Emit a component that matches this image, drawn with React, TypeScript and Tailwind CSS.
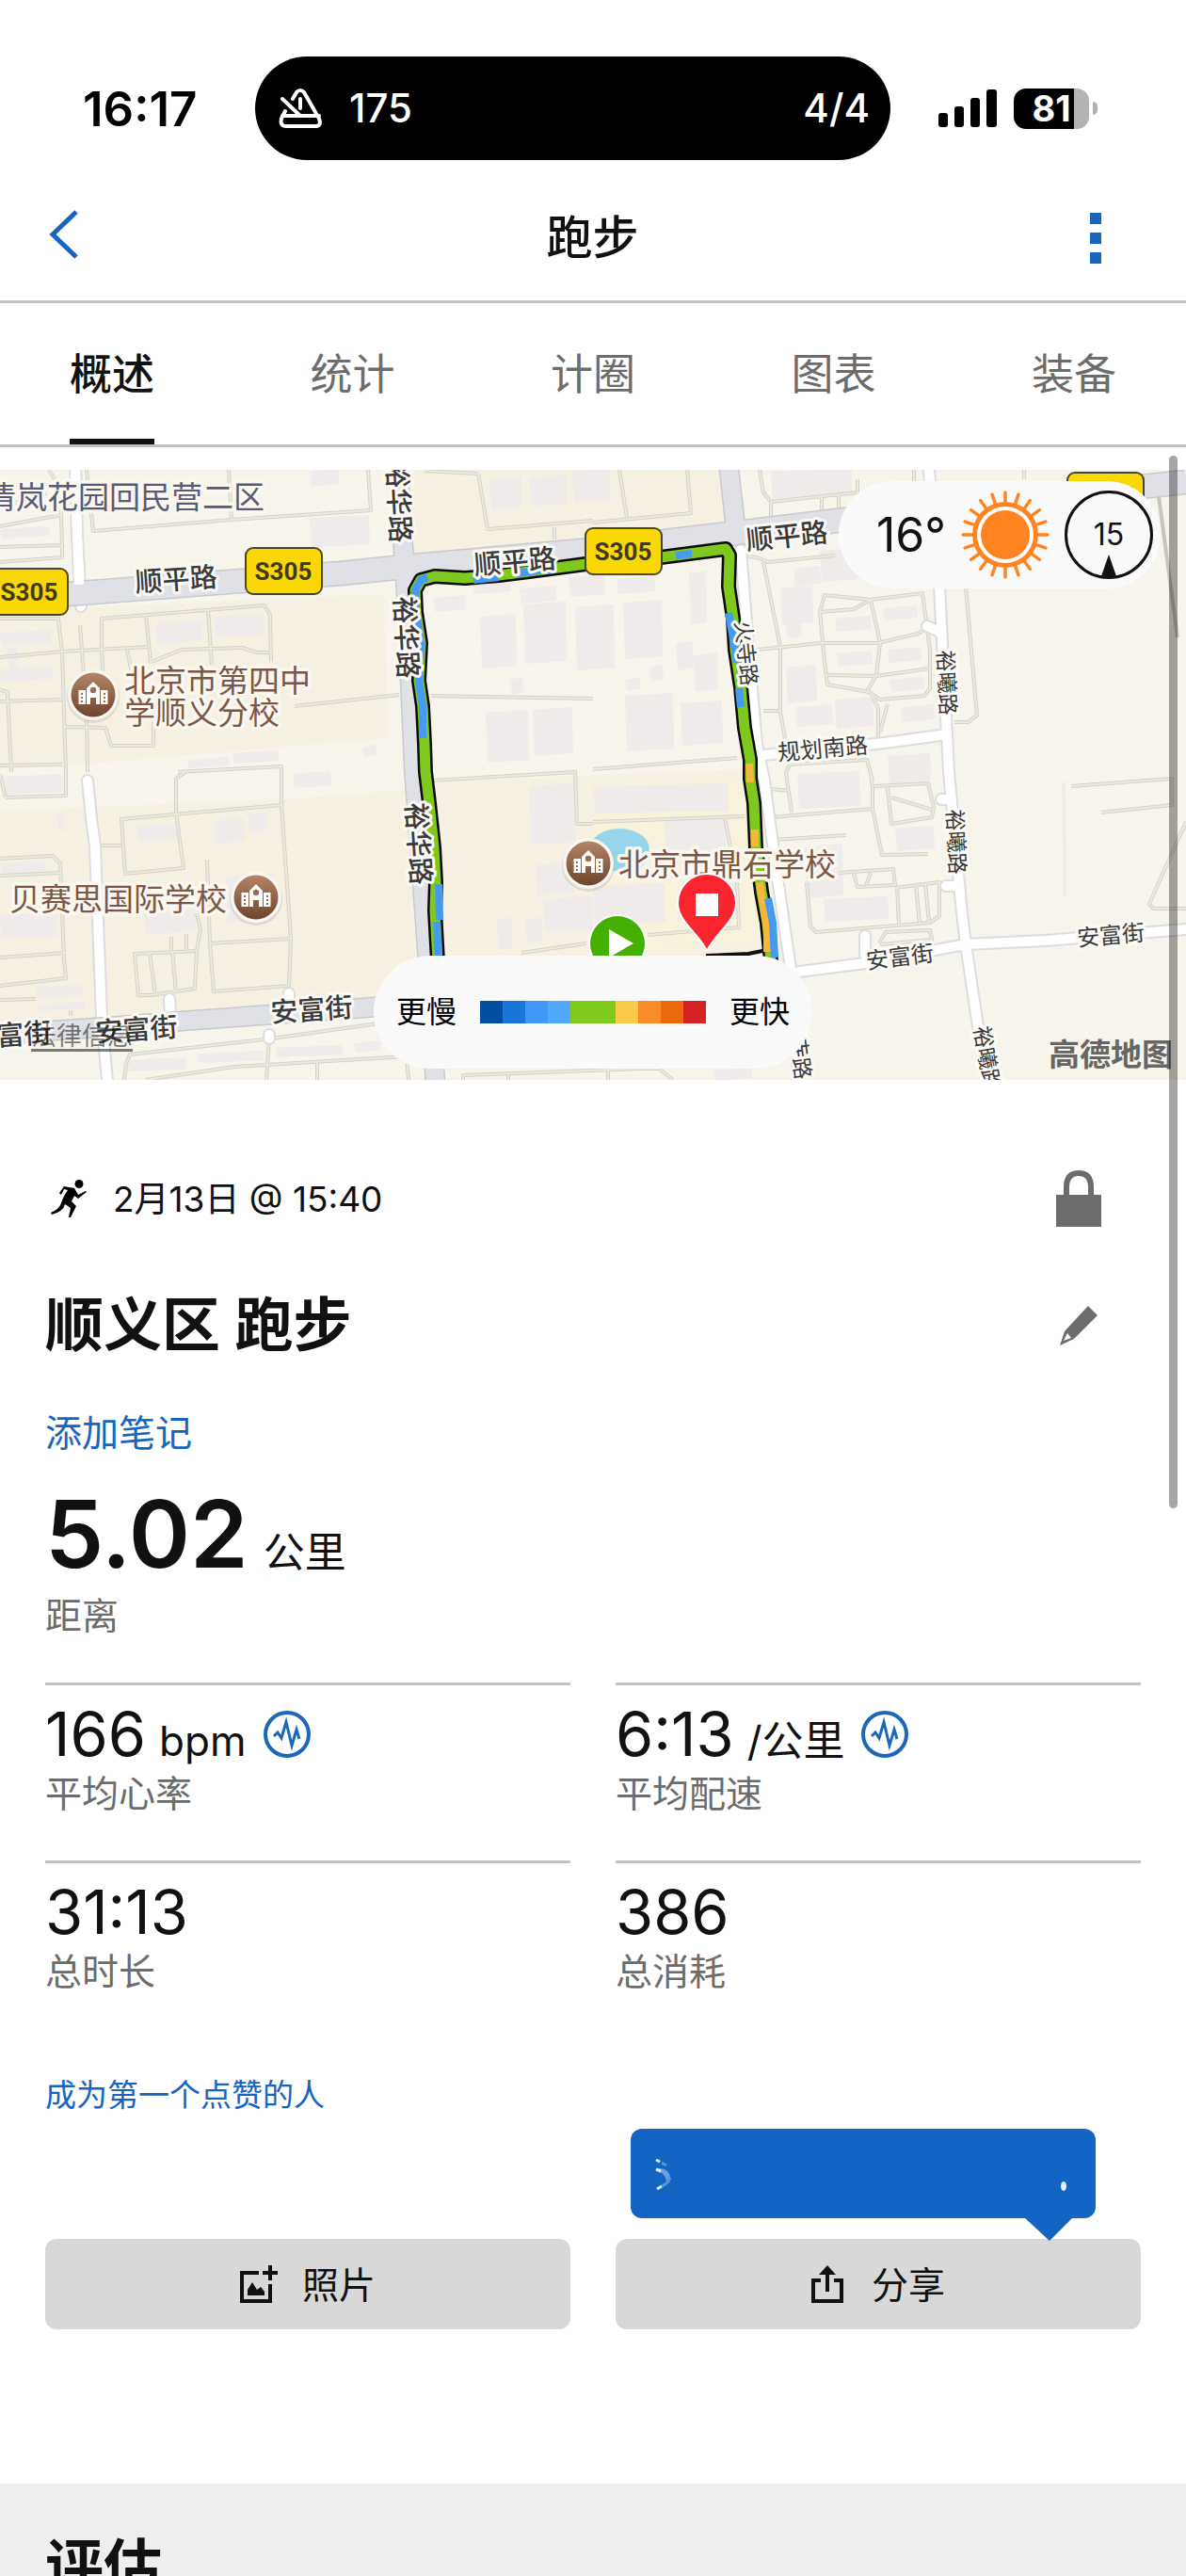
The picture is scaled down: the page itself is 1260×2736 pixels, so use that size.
import { useState } from "react";

const FONT = "font-['Inter','Noto_Sans_CJK_SC',sans-serif]";

const tabs = ["概述", "统计", "计圈", "图表", "装备"];

const legendColors = [
  "bg-[#004da3]",
  "bg-[#1976d8]",
  "bg-[#3f97f5]",
  "bg-[#52a8ff]",
  "bg-[#7ecb1c]",
  "bg-[#7ecb1c]",
  "bg-[#fdc94b]",
  "bg-[#fa8b29]",
  "bg-[#ec6a0d]",
  "bg-[#d52222]",
];

interface Stat {
  value: string;
  unit?: string;
  label: string;
  chart?: boolean;
}

const stats: Stat[] = [
  { value: "166", unit: "bpm", label: "平均心率", chart: true },
  { value: "6:13", unit: "/公里", label: "平均配速", chart: true },
  { value: "31:13", label: "总时长" },
  { value: "386", label: "总消耗" },
];

// Map data, in map units (1260 x 648)
const footpaths = [
  "M92 0 99 65 246 53 394 43 391 0M243 0 246 53",
  "M0 82 66 80 64 20 52 0M0 98 66 93V80M0 60 64 48M0 40 50 25",
  "M108 193V158L281 144 287 154 288 204M155 154 160 205M221 149 225 207",
  "M0 199 66 193 157 188M161 204 193 191 257 189 273 194H288",
  "M0 158H62L66 193 70 321M135 191 141 220M0 246 66 244M68 273 112 274 118 293H163V268",
  "M108 193 111 240M85 165 92 258 93 321M313 251 424 239M0 234 8 236 12 321M0 314 66 313",
  "M189 321 299 315 299 356M508 4 518 63 630 54M589 61V74M450 1 508 4M458 240 514 241 630 243",
  "M658 0 666 51M630 56 734 46 730 0M807 0 811 24 819 34 911 24V10M819 34V54M873 29V46M891 26V44",
  "M793 91 807 94 815 98 887 91M811 98 829 188V258L834 285M805 191 873 184 933 184 975 174 985 168",
  "M876 133 871 151 876 204 879 228 923 236 935 244 982 240 988 232V191L980 131 925 138Z",
  "M871 151 907 148 925 138 935 184 931 218 921 236M877 218 931 219 988 211M925 236 933 254V284M943 249 935 278",
  "M1026 124 1038 261 1028 268H1014M811 256H829M630 318 783 306M835 321 839 313 921 308 927 330M971 0V14M1088 0V10",
  "M459 330 611 321 613 376H630M630 374 791 368M820 369 927 360V338L925 321M835 321 841 364M819 339 839 341",
  "M929 336 986 333 992 358 990 369 947 376 943 338M947 348 990 361M927 360 937 409 986 408M821 393 899 388",
  "M891 428 949 424 951 441 911 443 907 428M925 428 920 441M951 444 998 438V474L988 481 867 491 861 485 857 438",
  "M953 443 955 483M973 441 977 482M983 440 987 480M935 501 941 491 988 489 990 499 937 504ZM827 431 839 524 849 530",
  "M1138 336 1245 328V356L1170 364M1260 374 1221 461 1225 466H1260M688 494 785 486 783 438M770 369 776 401M554 513 623 503",
  "M197 321 187 328V364L195 423 133 429 129 371 299 356 309 498 223 503 227 554 307 548 309 498M108 399H129",
  "M220 414 223 503M143 514 209 511 207 551 161 558H147ZM159 513 165 558M183 511 187 555M209 511 213 488 209 471M182 496V511M198 493V511",
  "M0 413 56 410 64 418 68 520 70 540 0 548M0 518 70 513M0 431 64 428M6 348 70 346V321M6 348 0 324M0 563 38 562M75 574V580",
  "M132 648 134 631 138 621 289 604 402 588M154 648 249 634 432 623 434 648M283 648 286 604M337 648V629M492 648V643L680 636 700 636 715 648M540 640V648M646 636V648",
];

const shunpingRoad = "M0 139 72 132 362 110 440 102 630 85 791 66 1020 38 1260 13";

const buildings = [
  [460, 134, 34, 16], [510, 154, 38, 56], [556, 141, 45, 64], [611, 144, 41, 68], [516, 256, 45, 54],
  [566, 253, 42, 50], [542, 221, 13, 17], [502, 118, 40, 13], [552, 124, 38, 17], [604, 112, 38, 22],
  [520, 8, 34, 34], [562, 6, 40, 32], [608, 0, 40, 34], [329, 49, 63, 32], [329, 0, 30, 17],
  [165, 161, 49, 23], [227, 154, 52, 23], [199, 306, 44, 10], [247, 299, 48, 12], [0, 61, 52, 11],
  [0, 171, 54, 15], [8, 188, 10, 26], [0, 210, 56, 14], [385, 293, 14, 11], [819, 0, 86, 30],
  [871, 84, 40, 34], [829, 124, 34, 40], [843, 103, 28, 20], [732, 108, 18, 56], [655, 114, 40, 17],
  [662, 139, 41, 61], [664, 238, 51, 60], [664, 221, 16, 13], [690, 208, 14, 16], [718, 183, 18, 29],
  [737, 195, 25, 40], [723, 246, 44, 46], [887, 156, 38, 15], [938, 145, 36, 14], [889, 193, 37, 15],
  [943, 189, 35, 15], [945, 221, 36, 14], [957, 250, 35, 17], [835, 208, 32, 39], [845, 250, 39, 22],
  [835, 163, 16, 16], [887, 242, 40, 32], [943, 302, 45, 30], [847, 321, 66, 38], [630, 334, 143, 30],
  [706, 371, 64, 36], [951, 379, 41, 25], [855, 398, 40, 56], [875, 454, 68, 25], [630, 440, 76, 42],
  [1128, 331, 4, 124], [724, 434, 60, 40], [311, 321, 40, 16], [2, 324, 64, 20], [145, 376, 44, 18],
  [227, 370, 32, 26], [263, 364, 20, 21], [153, 468, 54, 24], [562, 334, 49, 63], [569, 418, 40, 33],
  [577, 454, 52, 36], [0, 471, 60, 26], [38, 548, 50, 12], [40, 566, 50, 8], [528, 476, 16, 33],
  [558, 476, 17, 26], [134, 625, 63, 13], [209, 618, 70, 11], [292, 612, 71, 11], [376, 607, 28, 11],
  [758, 636, 40, 12], [60, 364, 8, 20], [240, 430, 50, 50], [0, 416, 48, 12],
];

const trackPoints =
  "M465 522 462 468 463 438 461 401 456 354 452 321 451 291 449 251 445 224 447 184 442 151 441 128 447 117 462 113 494 115 530 112 562 108 600 103 630 99 702 93 740 88 771 84 775 91 774 124 779 158 781 191 787 231 791 274 797 308 797 328 801 354 803 401 809 448 815 481 819 522";

const trackSegments = [
  { d: "M466 522 464 480", color: "#459bf1" },
  { d: "M466 440 467 478", color: "#459bf1" },
  { d: "M449 285 449 251 445 224 447 184 442 151 441 128 447 117 454 114", color: "#459bf1" },
  { d: "M503 117 530 114M549 110 590 105M718 91 735 89M774 152 781 191 783 205M785 232 787 252", color: "#459bf1" },
  { d: "M796 312 797 332M802 382 802 400M807 438 815 490 815 512", color: "#f5b83d" },
  { d: "M816 455 821 481 823 518", color: "#459bf1" },
];

const roadLabels = [
  { text: "顺平路", x: 187, y: 116, angle: -4, size: 29 },
  { text: "顺平路", x: 547, y: 97, angle: -5, size: 29 },
  { text: "顺平路", x: 836, y: 70, angle: -6, size: 29 },
  { text: "裕华路", x: 424, y: 34, angle: 87, size: 29 },
  { text: "裕华路", x: 432, y: 178, angle: 87, size: 29 },
  { text: "裕华路", x: 445, y: 397, angle: 86, size: 29 },
  { text: "安富街", x: 11, y: 600, angle: -4, size: 29 },
  { text: "安富街", x: 145, y: 594, angle: -4, size: 29 },
  { text: "安富街", x: 331, y: 573, angle: -4, size: 29 },
  { text: "火寺路", x: 793, y: 195, angle: 84, size: 23 },
  { text: "火寺路", x: 849, y: 613, angle: 82, size: 23 },
  { text: "裕曦路", x: 1006, y: 226, angle: 87, size: 23 },
  { text: "裕曦路", x: 1016, y: 395, angle: 87, size: 23 },
  { text: "裕曦路", x: 1049, y: 625, angle: 80, size: 23 },
  { text: "规划南路", x: 874, y: 296, angle: -5, size: 24 },
  { text: "安富街", x: 956, y: 517, angle: -7, size: 24 },
  { text: "安富街", x: 1180, y: 494, angle: -5, size: 24 },
];

const poiLabels = [
  { text: "清岚花园回民营二区", x: -16, y: 41, color: "#5b5a75" },
  { text: "北京市第四中", x: 132, y: 236, color: "#7d5746" },
  { text: "学顺义分校", x: 132, y: 270, color: "#7d5746" },
  { text: "贝赛思国际学校", x: 10, y: 468, color: "#7d5746" },
  { text: "北京市鼎石学校", x: 657, y: 431, color: "#7d5746" },
];

const shields = [
  [-9, 105],
  [261, 83],
  [622, 62],
  [1134, 3],
];

const schools = [
  [99, 239],
  [272, 454],
  [625, 418],
];

function SchoolPin({ x, y }: { x: number; y: number }) {
  return (
    <g transform={`translate(${x} ${y})`}>
      <circle cy="2" r="28" fill="#b9aea4" opacity="0.35" />
      <circle r="27" fill="#f8f6f2" />
      <circle r="23.5" fill="url(#school)" />
      <path
        fill="#fff"
        d="M-15.500 -5H-8V10H-15.500ZM8 -5H15.500V10H8ZM-7 -7 0 -14 7 -7V10H3V3H-3V10H-7Z"
      />
      <circle cy="-5" r="3.200" fill="#9a6c50" />
      <path
        fill="#9a6c50"
        d="M-13 -2h2v2h-2zM-13 2h2v2h-2zM-13 6h2v2h-2zM11 -2h2v2h-2zM11 2h2v2h-2zM11 6h2v2h-2z"
      />
    </g>
  );
}

function RouteMap() {
  return (
    <svg
      viewBox="0 0 1260 648"
      preserveAspectRatio="xMidYMid slice"
      className="block h-[648px] w-full"
      role="img"
      aria-label="跑步路线"
    >
      <defs>
        <linearGradient id="school" x1="0" y1="0" x2="0" y2="1">
          <stop offset="0" stopColor="#b48567" />
          <stop offset="1" stopColor="#6f452d" />
        </linearGradient>
      </defs>

      <rect width="1260" height="648" fill="#f6f4eb" />
      <g fill="#f6f0e2">
        <path d="M0 150 408 132 412 285 120 310 0 318ZM0 362 300 350 430 340 445 560 0 590Z" />
        <path d="M440 0H765L770 58 440 92ZM456 332 790 318 832 524 470 524Z" />
      </g>
      <path d="M630 335 790 330 815 500 640 515Z" fill="#f9f1d3" opacity="0.5" />

      <g fill="#eeebea">
        {buildings.map(([x, y, w, h], i) => (
          <path key={i} d={`M${x} ${y + 2} ${x + w} ${y - 1} ${x + w + 1} ${y + h - 2} ${x + 2} ${y + h + 1}Z`} />
        ))}
      </g>

      {footpaths.map((d) => (
        <path key={d} d={d} fill="none" stroke="#d3d2c9" strokeWidth="4" strokeLinejoin="round" />
      ))}
      {footpaths.map((d) => (
        <path key={d} d={d} fill="none" stroke="#ebeadf" strokeWidth="2" strokeLinejoin="round" />
      ))}
      <path d="M1231 28 1251 178" stroke="#c6c5be" strokeWidth="4" />

      {/* Local roads */}
      <g fill="none" strokeLinecap="round" strokeLinejoin="round">
        {[
          ["#dcdde0", 14],
          ["#ffffff", 10],
        ].map(([color, width]) => (
          <g key={color} stroke={color as string} strokeWidth={width}>
            <path d="M80 -10 82 70 86 145" />
            <path d="M93 330 97 370 101 400 108 581 115 660M180 562 181 580M307 556V570M286 600V604" />
            <path d="M986 -10 998 124 1006 281 1008 321 1022 471 1026 504 1040 598 1060 660" />
            <path d="M811 303 940 290 1006 281M985 166 998 172M1000 350 1008 350M1005 442 1018 442M919 495V515" />
            <path d="M787 85 796 200 804 291 812 330 824 420 840 530 848 648" />
            <path d="M849 533 919 524 1026 504 1110 500 1260 488" />
          </g>
        ))}
      </g>

      {/* Main roads */}
      <g fill="none" strokeLinejoin="round">
        {[
          ["#c9cacd", 27, 22],
          ["#e0e1e6", 24, 19],
        ].map(([color, wide, narrow]) => (
          <g key={color} stroke={color as string}>
            <path d="M423 -5 429 90 431 120 440 321 454 514 463 660" strokeWidth={narrow} />
            <path d="M-5 600 108 592 200 585 380 572 405 570" strokeWidth={narrow} />
            <path d="M774 -5 782 66" strokeWidth={narrow} />
            <path d={shunpingRoad} strokeWidth={wide} />
          </g>
        ))}
        <path d="M80 0 82 70 84 122" stroke="#fff" strokeWidth="10" />
        <path d="M423 0 429 90 431 130" stroke="#e0e1e6" strokeWidth="18" />
      </g>

      <path d="M630 392Q645 378 668 382 690 388 690 404L680 426H640Z" fill="#97d6ea" />

      {/* Recorded track, coloured by pace */}
      <g fill="none" strokeLinejoin="round">
        <path d="M815 510 795 514 750 516" stroke="#111" strokeWidth="4" />
        <path d={trackPoints} stroke="#0b0b0b" strokeWidth="16" />
        <path d={trackPoints} stroke="#7fc81e" strokeWidth="11" />
        {trackSegments.map(({ d, color }) => (
          <path key={d} d={d} stroke={color} strokeWidth="8" />
        ))}
      </g>

      {schools.map(([x, y]) => (
        <SchoolPin key={x} x={x} y={y} />
      ))}

      <g fontFamily="'Noto Sans CJK SC', sans-serif" paintOrder="stroke" strokeLinejoin="round">
        {roadLabels.map(({ text, x, y, angle, size }) => (
          <text
            key={`${text}-${x}`}
            transform={`translate(${x} ${y}) rotate(${angle})`}
            textAnchor="middle"
            dy="0.37em"
            fontSize={size}
            fontWeight={size > 25 ? 500 : 400}
            fill="#3a3a3a"
            stroke="#fbfaf6"
            strokeWidth="6"
          >
            {text}
          </text>
        ))}
        {poiLabels.map(({ text, x, y, color }) => (
          <text key={text} x={x} y={y} fontSize="33" fill={color} stroke="#faf7f0" strokeWidth="7">
            {text}
          </text>
        ))}
      </g>

      {shields.map(([x, y]) => (
        <g key={x}>
          <rect x={x} y={y} width="81" height="49" rx="8" fill="#f9d806" stroke="#4c4526" strokeWidth="2" />
          <text
            x={x + 40}
            y={y + 34}
            textAnchor="middle"
            fontFamily="Roboto, sans-serif"
            fontSize="26"
            fontWeight="700"
            fill="#403a20"
          >
            S305
          </text>
        </g>
      ))}

      {/* Start and finish */}
      <circle cx="656" cy="503" r="31" fill="#fff" />
      <circle cx="656" cy="503" r="29" fill="#44b000" />
      <path d="M647 488V518L673 503Z" fill="#fff" />
      <path
        d="M751 511C742 492 720 480 720 460A31 31 0 0 1 782 460C782 480 760 492 751 511Z"
        fill="#fb2530"
        stroke="#fff"
        strokeWidth="2"
      />
      <rect x="739" y="450" width="24" height="24" fill="#fff" />
    </svg>
  );
}

function SunIcon() {
  return (
    <svg viewBox="-47 -47 94 94" className="size-[94px]" aria-hidden="true">
      {Array.from({ length: 20 }, (_, i) => (
        <path key={i} d="M0 -33V-45" stroke="#ff8420" strokeWidth="3.500" strokeLinecap="round" transform={`rotate(${i * 18})`} />
      ))}
      <circle r="35" fill="#ff8420" />
      <circle r="30" fill="#fff" />
      <circle r="26" fill="#ff8420" />
    </svg>
  );
}

function PulseIcon() {
  return (
    <svg viewBox="0 0 50 50" className="size-[50px] self-center" fill="none" stroke="#1b67b8" aria-hidden="true">
      <circle cx="25" cy="25" r="23" strokeWidth="4" />
      <path d="M11 27 15 23 19 29 24 12 30 37 35 20 38 30" strokeWidth="3" />
    </svg>
  );
}

function StatusBar() {
  return (
    <div className="flex items-center pt-15">
      <div className="w-[271px] pl-[88px] text-[51px] leading-none font-semibold text-black">16:17</div>
      <div className="flex h-[110px] flex-1 items-center rounded-full bg-black pr-[22px] pl-[24px] text-[42px] leading-none font-medium text-white">
        <svg viewBox="0 0 48 44" className="mr-7 h-[44px] w-[48px]" fill="none" stroke="#fff" strokeWidth="4" strokeLinecap="round" strokeLinejoin="round" aria-hidden="true">
          <path d="M16 12 20 5Q24 1 28 5L44 33Q47 41 40 41H9Q2 41 4 33L8 25" />
          <path d="M5 30H44M24 12V22M5 12 24 30" />
        </svg>
        <span className="flex-1">175</span>
        <span>4/4</span>
      </div>
      <div className="flex w-[314px] items-center gap-[18px] pl-[51px]">
        <svg viewBox="0 0 62 40" className="h-[40px] w-[62px]" aria-hidden="true">
          <rect y="25" width="10" height="15" rx="3" />
          <rect x="17" y="18" width="10" height="22" rx="3" />
          <rect x="34" y="9" width="10" height="31" rx="3" />
          <rect x="51" width="11" height="40" rx="3" />
        </svg>
        <div className="flex items-center gap-1">
          <div className="flex h-[43px] w-[80px] items-center justify-center overflow-hidden rounded-[13px] bg-linear-to-r from-black from-80% to-[#b3b3b3] to-80% text-[38px] leading-none font-bold text-white">
            81
          </div>
          <div className="h-[14px] w-[5px] rounded-r-full bg-[#b3b3b3]" />
        </div>
      </div>
    </div>
  );
}

export default function App() {
  const [activeTab, setActiveTab] = useState(tabs[0]);

  return (
    <div className={`relative flex h-screen flex-col overflow-hidden bg-white text-[#111] ${FONT}`}>
      <StatusBar />

      <header className="flex h-[152px] shrink-0 items-center justify-between border-b-3 border-[#c1c1c1] pt-4 pr-[90px] pl-[51px]">
        <button type="button" aria-label="返回" className="pb-2">
          <svg viewBox="0 0 34 52" className="h-[52px] w-[34px]" fill="none" stroke="#1665c1" strokeWidth="5" aria-hidden="true">
            <path d="M30 2 5 26 30 50" />
          </svg>
        </button>
        <h1 className="pl-4 text-[49px] leading-none font-medium">跑步</h1>
        <button type="button" aria-label="更多" className="flex flex-col gap-[9px]">
          <span className="size-3 bg-[#1665c1]" />
          <span className="size-3 bg-[#1665c1]" />
          <span className="size-3 bg-[#1665c1]" />
        </button>
      </header>

      <nav className="flex h-[153px] shrink-0 justify-between border-b-3 border-[#c1c1c1] px-[74px] text-[45px] leading-none">
        {tabs.map((tab) => (
          <button
            key={tab}
            type="button"
            onClick={() => setActiveTab(tab)}
            className={`border-y-6 border-t-transparent ${
              tab === activeTab ? "border-b-[#111] font-medium" : "border-b-transparent text-[#6c6c6c]"
            }`}
          >
            {tab}
          </button>
        ))}
      </nav>

      <main className="flex-1 overflow-hidden pt-6">
        <section className="relative">
          <RouteMap />
          <a href="#legal" className="absolute bottom-[30px] left-[33px] border-b-3 border-black/50 text-[27px] leading-none text-black/50">
            法律信息
          </a>
          <div className="absolute right-[14px] bottom-[10px] text-[33px] leading-none font-bold text-[#666]">高德地图</div>

          <div className="absolute top-3 right-[27px] flex h-[114px] items-center gap-4 rounded-full bg-[#fafafa] pr-2 pl-[40px]">
            <span className="text-[50px] leading-none">16°</span>
            <SunIcon />
            <div className="relative flex size-[94px] items-center justify-center rounded-full border-3 border-[#111] text-[32px] leading-none">
              15
              <svg viewBox="0 0 16 24" className="absolute -bottom-px left-9 h-6 w-4" aria-hidden="true">
                <path d="M8 0 16 23H0Z" fill="#111" />
              </svg>
            </div>
          </div>

          <div className="absolute bottom-3 left-1/2 flex h-[120px] w-[466px] -translate-x-1/2 items-center justify-between rounded-full bg-[#fafafa] px-6 text-[32px] leading-none text-black">
            <span>更慢</span>
            <div className="flex h-6 w-[240px]">
              {legendColors.map((color, i) => (
                <div key={i} className={`flex-1 ${color}`} />
              ))}
            </div>
            <span>更快</span>
          </div>
        </section>

        <section className="px-12 pt-24">
          <div className="flex h-[60px] items-center">
            <svg viewBox="0 0 38 41" className="mr-7 ml-[6px] h-[41px] w-[38px]" aria-hidden="true">
              <circle cx="30" cy="4.500" r="4.500" />
              <path d="M14 7 25 9 29 16 37 12 38 13 29 20 25 17 22 23 27 28 21 40 19 40 21 30 15 26Q13 34 1 37L0 35Q9 31 11 25 13 18 18 11L14 10 11 16 9 14Z" />
            </svg>
            <time className="flex-1 text-[37px] leading-none">2月13日 @ 15:40</time>
            <button type="button" aria-label="隐私设置" className="mr-[42px]">
              <svg viewBox="0 0 48 60" className="h-[60px] w-[48px]" aria-hidden="true">
                <path d="M11 28V18Q11 3 24 3T37 18V28" fill="none" stroke="#6c6c6c" strokeWidth="6" />
                <rect y="26" width="48" height="34" fill="#6c6c6c" />
              </svg>
            </button>
          </div>

          <div className="mt-[69px] flex h-[72px] items-center justify-between">
            <h2 className="text-[62px] leading-none font-semibold">顺义区 跑步</h2>
            <button type="button" aria-label="编辑名称" className="mr-[46px]">
              <svg viewBox="0 0 40 42" className="h-[42px] w-[40px]" fill="#6c6c6c" aria-hidden="true">
                <path d="M30 0 40 10 15 35 0 42 5 27ZM8 29 4 37 12 34Z" fillRule="evenodd" />
              </svg>
            </button>
          </div>

          <a href="#notes" className="mt-[53px] flex h-12 items-center text-[39px] leading-none text-[#1665c1]">
            添加笔记
          </a>

          <div className="mt-[33px] flex h-[102px] items-baseline gap-4">
            <span className="text-[99px] leading-[102px] font-semibold">5.02</span>
            <span className="text-[44px] leading-none">公里</span>
          </div>
          <div className="mt-[11px] flex h-12 items-center text-[39px] leading-none text-[#6c6c6c]">距离</div>

          <div className="mt-12 grid grid-cols-2 gap-x-12">
            {stats.map(({ value, unit, label, chart }) => (
              <div key={label} className="border-t-3 border-[#c1c1c1] pt-5 pb-12">
                <div className="flex h-16 items-baseline">
                  <span className="text-[65px] leading-[64px]">{value}</span>
                  {unit && <span className="mr-[18px] ml-[14px] text-[44px] leading-none">{unit}</span>}
                  {chart && <PulseIcon />}
                </div>
                <div className="mt-[6px] flex h-12 items-center text-[39px] leading-none text-[#6c6c6c]">{label}</div>
              </div>
            ))}
          </div>

          <a href="#likes" className="mt-10 flex h-10 items-center text-[33px] leading-none text-[#1665c1]">
            成为第一个点赞的人
          </a>

          <div className="relative mt-[133px] grid grid-cols-2 gap-x-12 text-[39px] leading-none">
            <button type="button" className="flex h-24 items-center justify-center gap-[26px] rounded-xl bg-[#d8d8d8]">
              <svg viewBox="0 0 40 40" className="size-10" aria-hidden="true">
                <path d="M20 8H2V38H32V20" fill="none" stroke="#111" strokeWidth="4" />
                <path d="M32 0V16M24 8H40" stroke="#111" strokeWidth="4" />
                <path d="M8 32V26L13 18 18 26 22 23 26 28V32Z" fill="#111" />
              </svg>
              照片
            </button>
            <button type="button" className="flex h-24 items-center justify-center gap-[30px] rounded-xl bg-[#d8d8d8]">
              <svg viewBox="0 0 34 40" className="h-10 w-[34px]" fill="none" stroke="#111" strokeWidth="4" aria-hidden="true">
                <path d="M10 16H2V38H32V16H24M17 28V5" />
                <path d="M17 0 26 10H8Z" fill="#111" stroke="none" />
              </svg>
              分享
            </button>
            <div className="absolute right-[48px] bottom-[118px] h-[95px] w-[494px] rounded-xl bg-[#1464c4]">
              <svg viewBox="0 0 494 119" className="h-[119px] w-[494px]" aria-hidden="true">
                <path d="M418 94H470L445 119Z" fill="#1464c4" />
                <path d="M30 42Q42 42 42 54L38 58Q38 48 30 46Z" fill="#6d9fdc" />
                <path d="M27 33 31 35M27 43 32 45M28 64 33 61" fill="none" stroke="#e6f0fb" strokeWidth="3" />
                <path d="M33 36 38 39M33 61Q40 58 42 52" fill="none" stroke="#5a93d8" strokeWidth="3" />
                <ellipse cx="460" cy="61" rx="3" ry="5" fill="#e6f0fb" />
              </svg>
            </div>
          </div>
        </section>

        <section className="mt-[164px] bg-[#eee] px-12 pt-[53px] pb-12">
          <h2 className="text-[62px] leading-[72px] font-bold">评估</h2>
        </section>
      </main>

      {/* Scroll indicator */}
      <div className="absolute top-[484px] right-[9px] h-[1118px] w-[9px] rounded-full bg-black/35" />
    </div>
  );
}
